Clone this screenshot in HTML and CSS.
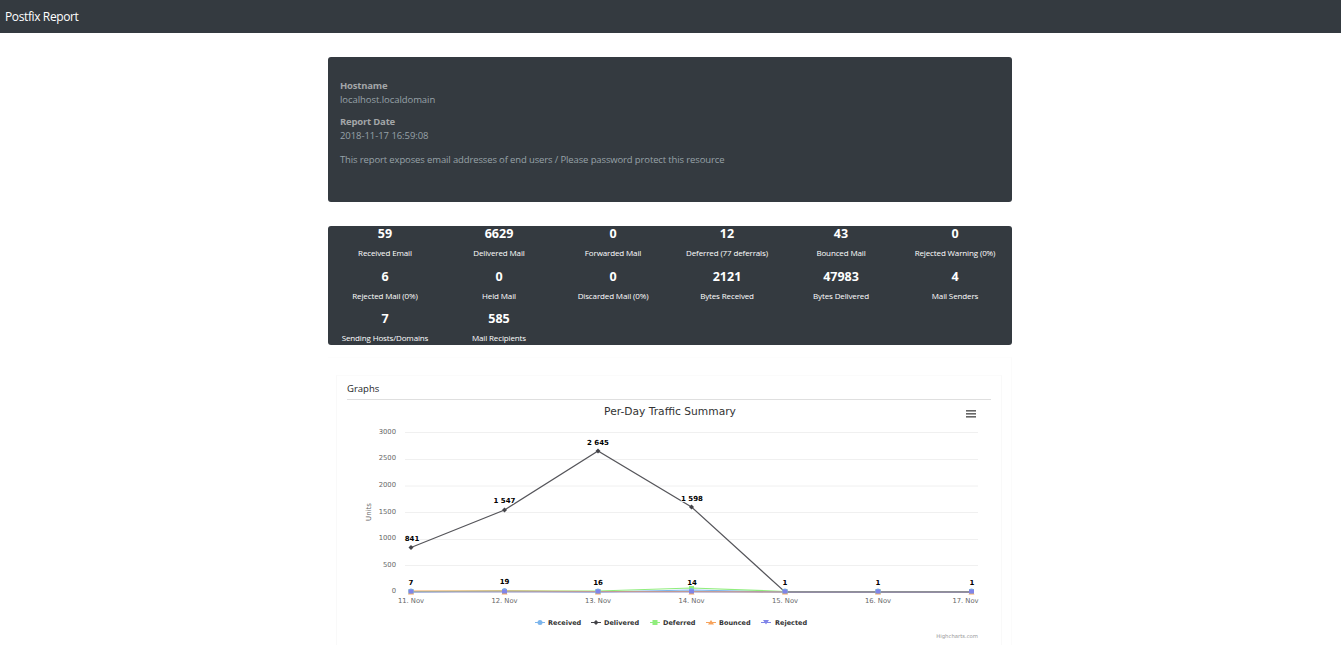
FILE: index.html
```html
<!DOCTYPE html>
<html lang="en">
<head>
<meta charset="utf-8">
<title>Postfix Report</title>
<link rel="stylesheet" href="styles.css">
</head>
<body>
<nav class="navbar"><span class="brand">Postfix Report</span></nav>
<main class="container">
  <section class="jumbo">
    <h4 class="jumbo-label">Hostname</h4>
    <p class="jumbo-value">localhost.localdomain</p>
    <h4 class="jumbo-label">Report Date</h4>
    <p class="jumbo-value">2018-11-17 16:59:08</p>
    <p class="jumbo-note">This report exposes email addresses of end users / Please password protect this resource</p>
  </section>
  <section class="stats">
    <div class="stat"><b>59</b><span>Received Email</span></div>
    <div class="stat"><b>6629</b><span>Delivered Mail</span></div>
    <div class="stat"><b>0</b><span>Forwarded Mail</span></div>
    <div class="stat"><b>12</b><span>Deferred (77 deferrals)</span></div>
    <div class="stat"><b>43</b><span>Bounced Mail</span></div>
    <div class="stat"><b>0</b><span>Rejected Warning (0%)</span></div>
    <div class="stat"><b>6</b><span>Rejected Mail (0%)</span></div>
    <div class="stat"><b>0</b><span>Held Mail</span></div>
    <div class="stat"><b>0</b><span>Discarded Mail (0%)</span></div>
    <div class="stat"><b>2121</b><span>Bytes Received</span></div>
    <div class="stat"><b>47983</b><span>Bytes Delivered</span></div>
    <div class="stat"><b>4</b><span>Mail Senders</span></div>
    <div class="stat"><b>7</b><span>Sending Hosts/Domains</span></div>
    <div class="stat"><b>585</b><span>Mail Recipients</span></div>
  </section>
  <section class="outer">
    <div class="card">
      <h5 class="card-title">Graphs</h5>
      <svg class="chart" viewBox="347 400 645 246" width="645" height="246" xmlns="http://www.w3.org/2000/svg">
        <text class="title" x="670" y="415" text-anchor="middle">Per-Day Traffic Summary</text>
        <g class="menu"><rect x="966" y="410" width="10" height="1.6"/><rect x="966" y="413" width="10" height="1.6"/><rect x="966" y="416" width="10" height="1.6"/></g>
        <g class="grid">
          <line x1="405" x2="978" y1="432.5" y2="432.5"/><line x1="405" x2="978" y1="459.5" y2="459.5"/>
          <line x1="405" x2="978" y1="486" y2="486"/><line x1="405" x2="978" y1="512.5" y2="512.5"/>
          <line x1="405" x2="978" y1="539.5" y2="539.5"/><line x1="405" x2="978" y1="565.5" y2="565.5"/>
        </g>
        <g class="yaxis" text-anchor="end">
          <text x="396" y="434">3000</text><text x="396" y="460">2500</text><text x="396" y="487">2000</text>
          <text x="396" y="514">1500</text><text x="396" y="540">1000</text><text x="396" y="567">500</text><text x="396" y="593">0</text>
        </g>
        <text class="ytitle" transform="translate(371 512) rotate(-90)" text-anchor="middle">Units</text>
        <g class="xaxis" text-anchor="middle">
          <text x="411" y="603">11. Nov</text><text x="504.5" y="603">12. Nov</text><text x="598" y="603">13. Nov</text>
          <text x="691.5" y="603">14. Nov</text><text x="785" y="603">15. Nov</text><text x="878" y="603">16. Nov</text><text x="965.5" y="603">17. Nov</text>
        </g>
        <polyline class="s-rec" points="411,592 504.5,591 598,592 691.5,590 785,592 878,592 971.5,592"/>
        <polyline class="s-def" points="411,591.5 504.5,591 598,591 691.5,588 785,591.5 878,591.5 971.5,591.5"/>
        <polyline class="s-bou" points="411,591 504.5,591 598,591.5 691.5,591.5 785,592 878,592 971.5,592"/>
        <polyline class="s-del" points="411,547.5 504.5,510 598,451 691.5,507 785,592 878,592 971.5,592"/>
        <polyline class="s-rej" points="411,592 504.5,592 598,592 691.5,592 785,592 878,592 971.5,592"/>
        <g class="p-def">
          <rect x="408.5" y="589" width="5" height="5"/><rect x="502" y="589" width="5" height="5"/><rect x="595.5" y="589" width="5" height="5"/>
          <rect x="689" y="586" width="5" height="5"/><rect x="782.5" y="589" width="5" height="5"/><rect x="875.5" y="589" width="5" height="5"/><rect x="969" y="589" width="5" height="5"/>
        </g>
        <g class="p-bou">
          <path d="M411 590l3 4.500h-6z"/><path d="M504.5 590l3 4.500h-6z"/><path d="M598 590l3 4.500h-6z"/><path d="M691.5 590l3 4.500h-6z"/><path d="M785 590l3 4.500h-6z"/><path d="M878 590l3 4.500h-6z"/><path d="M971.5 590l3 4.500h-6z"/>
        </g>
        <g class="p-rec">
          <circle cx="411" cy="591" r="2.5"/><circle cx="504.5" cy="590.500" r="2.5"/><circle cx="598" cy="591" r="2.5"/><circle cx="691.5" cy="590.500" r="2.5"/><circle cx="785" cy="591" r="2.5"/><circle cx="878" cy="591" r="2.5"/><circle cx="971.5" cy="591" r="2.5"/>
        </g>
        <g class="p-rej">
          <rect x="408.5" y="589.500" width="5" height="4"/><rect x="502" y="589.500" width="5" height="4"/><rect x="595.500" y="589.500" width="5" height="4"/><rect x="689" y="589.500" width="5" height="4"/><rect x="782.500" y="589.500" width="5" height="4"/><rect x="875.500" y="589.500" width="5" height="4"/><rect x="969" y="589.500" width="5" height="4"/>
        </g>
        <g class="p-del">
          <path d="M411 545l2.500 2.500-2.500 2.500-2.500-2.500z"/><path d="M504.500 507.500l2.500 2.500-2.500 2.500-2.500-2.500z"/><path d="M598 448.500l2.500 2.500-2.500 2.500-2.500-2.500z"/><path d="M691.500 504.500l2.500 2.500-2.500 2.500-2.500-2.500z"/>
        </g>
        <g class="labels" text-anchor="middle">
          <text x="412" y="541">841</text><text x="504.500" y="503">1 547</text><text x="598" y="445">2 645</text><text x="692" y="501">1 598</text>
          <text x="411" y="585">7</text><text x="504.500" y="584">19</text><text x="598" y="585">16</text><text x="692" y="585">14</text>
          <text x="785" y="585">1</text><text x="878" y="585">1</text><text x="972" y="585">1</text>
        </g>
        <g class="legend">
          <line class="k-rec" x1="535" x2="545" y1="622.500" y2="622.500"/><circle class="m-rec" cx="540" cy="622.500" r="2.500"/><text x="548" y="625">Received</text>
          <line class="k-del" x1="591" x2="601" y1="622.500" y2="622.500"/><path class="m-del" d="M596 620l2.500 2.500-2.500 2.500-2.500-2.500z"/><text x="604" y="625">Delivered</text>
          <line class="k-def" x1="650" x2="660" y1="622.500" y2="622.500"/><rect class="m-def" x="652.500" y="620" width="5" height="5"/><text x="663" y="625">Deferred</text>
          <line class="k-bou" x1="706" x2="716" y1="622.500" y2="622.500"/><path class="m-bou" d="M711 620l3 4.500h-6z"/><text x="719" y="625">Bounced</text>
          <line class="k-rej" x1="761" x2="771" y1="622.500" y2="622.500"/><path class="m-rej" d="M763 620h6l-3 4.500z"/><text x="775" y="625">Rejected</text>
        </g>
        <text class="credit" x="978" y="638" text-anchor="end">Highcharts.com</text>
      </svg>
    </div>
  </section>
</main>
</body>
</html>
```
FILE: styles.css
```css
html, body { margin: 0; padding: 0; }
body { background: #fff; font-family: "Open Sans", "Noto Sans", sans-serif; color: #212529; }
.navbar { height: 33px; background: #343a40; display: flex; align-items: center; padding-left: 5px; }
.brand { color: #fff; font-size: 12px; letter-spacing: -0.38px; }
.container { width: 684px; margin: 24px 0 0 328px; display: flex; flex-direction: column; }
.jumbo { height: 145px; box-sizing: border-box; background: #343a40; border-radius: 3px; padding: 22px 12px 0; color: #a5a9ad; font-size: 9.500px; }
.jumbo-label { margin: 0; font-size: 9.500px; line-height: 14px; font-weight: 700; color: #a3a6a8; letter-spacing: -0.2px; }
.jumbo-value { margin: 0 0 9px; line-height: 13px; color: #97a2a9; letter-spacing: -0.06px; }
.jumbo-note { margin: 10.500px 0 0; line-height: 14px; color: #97a2a8; letter-spacing: -0.13px; }
.stats { margin-top: 24px; height: 119px; background: #343a40; border-radius: 3px; display: grid; grid-template-columns: repeat(6, 114px); grid-auto-rows: 42.500px; }
.stat { display: flex; flex-direction: column; align-items: center; color: #fff; }
.stat b { font-size: 12.500px; line-height: 15px; font-weight: 700; }
.stat span { font-size: 8px; line-height: 12px; margin-top: 6px; white-space: nowrap; letter-spacing: -0.13px; }
.outer { margin-top: 12px; height: 288px; box-sizing: border-box; border-top: 1px solid #fdfdfd; border-right: 1px solid #fbfbfb; padding: 17px 9px 0 8px; }
.card { height: 271px; box-sizing: border-box; border-left: 1px solid #f9f9f9; border-right: 1px solid #f9f9f9; border-top: 1px solid #fbfbfb; padding: 6px 10px 0 10px; display: flex; flex-direction: column; }
.card-title { margin: 0; height: 17px; font-size: 9.500px; line-height: 14px; font-weight: 400; color: #212529; border-bottom: 1px solid #dfdfdf; }
.chart { display: block; width: 645px; height: 246px; flex: none; }
.chart text { font-family: "DejaVu Sans", "Liberation Sans", sans-serif; }
.title { font-size: 10.700px; fill: #333; }
.menu rect { fill: #666; }
.grid line { stroke: #f0f0f0; stroke-width: 1; }
.yaxis text, .xaxis text { font-size: 6.800px; fill: #666; }
.ytitle { font-size: 7px; fill: #666; }
.s-rec, .s-del, .s-def, .s-bou, .s-rej { fill: none; stroke-width: 1.200px; }
.s-rec { stroke: #7cb5ec; }
.s-del { stroke: #55555a; }
.s-def { stroke: #90ed7d; }
.s-bou { stroke: #f7a35c; }
.s-rej { stroke: #8f92c9; }
.p-rec { fill: #7cb5ec; }
.p-def { fill: #90ed7d; }
.p-bou { fill: #f7a35c; }
.p-rej { fill: #8085e9; }
.p-del { fill: #434348; }
.labels text { font-size: 7px; font-weight: 700; fill: #000; stroke: #fff; stroke-width: 1.500px; paint-order: stroke; }
.legend text { font-size: 6.500px; font-weight: 700; fill: #333; }
.k-rec { stroke: #7cb5ec; } .m-rec { fill: #7cb5ec; }
.k-del { stroke: #434348; } .m-del { fill: #434348; }
.k-def { stroke: #90ed7d; } .m-def { fill: #90ed7d; }
.k-bou { stroke: #f7a35c; } .m-bou { fill: #f7a35c; }
.k-rej { stroke: #8085e9; } .m-rej { fill: #8085e9; }
.credit { font-size: 5.300px; fill: #999; }
```
